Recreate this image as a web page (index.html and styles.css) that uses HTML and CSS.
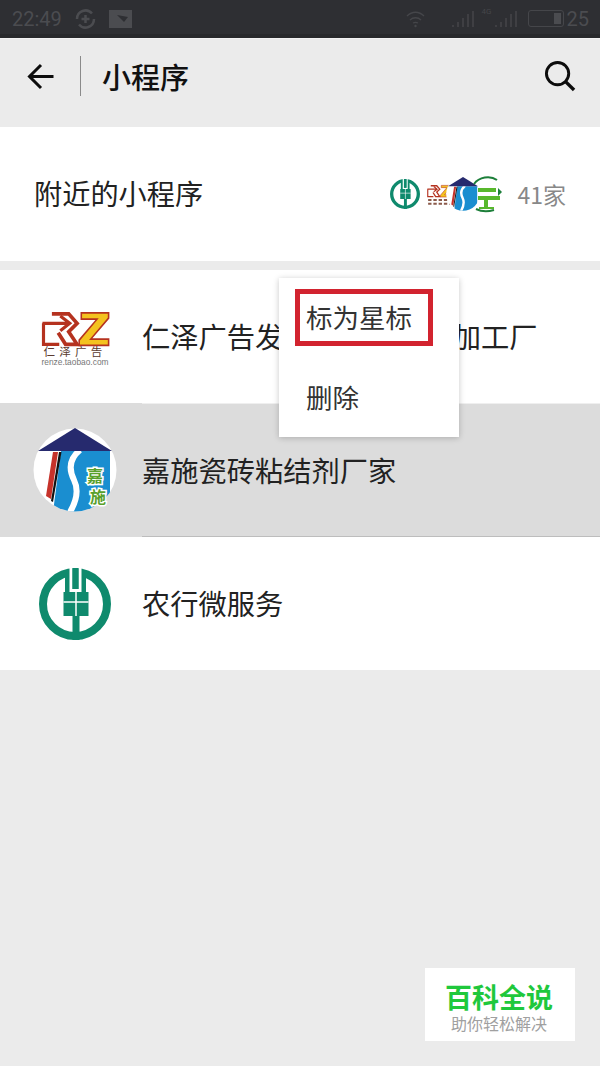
FILE: index.html
```html
<!DOCTYPE html>
<html lang="zh">
<head>
<meta charset="utf-8">
<title>小程序</title>
<link rel="stylesheet" href="styles.css">
</head>
<body>
<svg class="defs" width="0" height="0" aria-hidden="true">
  <symbol id="abc" viewBox="0.500 0 72 72">
    <circle cx="36.500" cy="36" r="32" fill="none" stroke="#0f8a6d" stroke-width="8"/>
    <rect x="26.500" y="3" width="21" height="21" fill="#0f8a6d"/>
    <path d="M31 0h3v21h6V0h3v24H31z" fill="#fff"/>
    <rect x="34" y="0" width="6" height="21" fill="#0f8a6d"/>
    <rect x="25" y="24" width="25" height="24" fill="#0f8a6d"/>
    <rect x="34" y="47" width="7" height="25" fill="#0f8a6d"/>
    <path d="M25 34h25M37.500 24v24" stroke="#fff" stroke-width="1.500" fill="none"/>
  </symbol>
  <symbol id="rz" viewBox="0 0 80 80">
    <path d="M18 18h16l8 9-8 8 8 12H31l-7-11" fill="none" stroke="#b5321f" stroke-width="3.500"/>
    <path d="M9 27h24M26 20l9 7-9 7M10 27v20h15" fill="none" stroke="#b5321f" stroke-width="3"/>
    <path d="M46 17h26v5L55 42h17v6H44v-5L61 23H46z" fill="#f4c21f" stroke="#b5321f" stroke-width="1.500"/>
  </symbol>
  <symbol id="js" viewBox="0 0 84 84">
    <circle cx="42" cy="42" r="41.500" fill="#fff"/>
    <clipPath id="jsclip"><circle cx="42" cy="42" r="41.500"/></clipPath>
    <g clip-path="url(#jsclip)">
      <path d="M28 23h49v61H20z" fill="#1a8ed0"/>
      <path d="M47 22C36 31 36 42 41 52C46 62 44 72 37 84" fill="none" stroke="#fff" stroke-width="6"/>
      <path d="M20 24h5l-7 47-5-3z" fill="#c6322a"/>
      <path d="M26 24h2.500l-8.500 50-2-1z" fill="#111"/>
    </g>
    <path d="M42 0L79 23H5z" fill="#262a6e"/>
  </symbol>
  <symbol id="leaf" viewBox="0 0 32 38">
    <path d="M4 9C9 2 20 0 27 5M6 34q8 4 18 1" fill="none" stroke="#1d7f3a" stroke-width="2"/>
    <path d="M8 13h18v4H8zM8 21h22v4H18v7h6v2H9v-2h5v-7H8z" fill="#58b82c"/>
    <path d="M28 13l4 4-4 4z" fill="#1d7f3a"/>
  </symbol>
</svg>

<div class="status">
  <span class="clock">22:49</span>
  <svg class="st-icon" width="21" height="20" viewBox="0 0 21 20"><path d="M2 10a8.500 8.500 0 0 1 15-5.500M19 10a8.500 8.500 0 0 1-15 5.500" fill="none" stroke="#4b4c50" stroke-width="2.500"/><path d="M10.500 6v8M6.500 10h8" stroke="#4b4c50" stroke-width="2.500"/></svg>
  <svg class="st-icon" width="23" height="18" viewBox="0 0 23 18"><path d="M0 0h23v18H0z" fill="#4b4c50"/><path d="M8 5l11 2-4 5z" fill="#2e2f33"/></svg>
  <span class="st-spacer"></span>
  <svg width="19" height="18" viewBox="0 0 19 18" class="wifi"><path d="M1 6c5-5 12-5 17 0M4 10c3-3 8-3 11 0M7 13c2-1 3-1 5 0" fill="none" stroke="#45464a" stroke-width="1.300"/><circle cx="9.500" cy="16" r="1.200" fill="#45464a"/></svg>
  <svg width="23" height="18" viewBox="0 0 23 18" class="sig1"><path d="M2 17v-2M7 17v-5M12 17V8M17 17V4M22 17V1" stroke="#45464a" stroke-width="1.500"/></svg>
  <span class="lte">4G</span>
  <svg width="23" height="18" viewBox="0 0 23 18" class="sig2"><path d="M2 17v-2M7 17v-5M12 17V8M17 17V4M22 17V1" stroke="#45464a" stroke-width="1.500"/></svg>
  <span class="batt"><span class="batt-fill"></span></span>
  <span class="pct">25</span>
</div>

<header class="bar">
  <svg class="back" width="27" height="27" viewBox="0 0 27 27"><path d="M26.500 13.500H3M14 2L2.500 13.500 14 25" fill="none" stroke="#0c0c0c" stroke-width="3"/></svg>
  <span class="sep"></span>
  <h1 class="title">小程序</h1>
  <svg class="search" width="32" height="32" viewBox="0 0 33 33"><circle cx="14" cy="14" r="11.500" fill="none" stroke="#0c0c0c" stroke-width="3"/><path d="M22 22l9 9" stroke="#0c0c0c" stroke-width="3.500"/></svg>
</header>

<section class="nearby">
  <span class="nearby-label">附近的小程序</span>
  <span class="stack">
    <svg class="av av-abc"><use href="#abc"/></svg>
    <svg class="av av-rz" viewBox="0 0 80 80">
      <use href="#rz" width="80" height="80"/>
      <path d="M11 56h58M11 66h58" stroke="#8a5a4a" stroke-width="5" stroke-dasharray="9 5" fill="none"/>
    </svg>
    <svg class="av av-js"><use href="#js"/></svg>
    <svg class="av av-leaf"><use href="#leaf"/></svg>
  </span>
  <span class="count">41家</span>
</section>

<ul class="list">
  <li class="row">
    <span class="logo">
      <svg class="logo-rz" viewBox="0 0 80 80">
        <use href="#rz" width="80" height="80"/>
        <text x="40" y="58" class="rz-cn" text-anchor="middle">仁泽广告</text>
        <text x="40" y="67" class="rz-en" text-anchor="middle">renze.taobao.com</text>
      </svg>
    </span>
    <span class="name">仁泽广告发光字招牌标识加工厂</span>
  </li>
  <li class="row row-active">
    <span class="logo">
      <svg class="logo-js" viewBox="0 0 84 84">
        <use href="#js" width="84" height="84"/>
        <text x="62" y="54" class="js-cn" text-anchor="middle">嘉</text>
        <text x="65" y="75" class="js-cn" text-anchor="middle">施</text>
      </svg>
    </span>
    <span class="name">嘉施瓷砖粘结剂厂家</span>
  </li>
  <li class="row">
    <span class="logo"><svg class="logo-abc"><use href="#abc"/></svg></span>
    <span class="name">农行微服务</span>
  </li>
</ul>

<div class="menu">
  <div class="menu-item menu-item-marked">标为星标</div>
  <div class="menu-item">删除</div>
</div>

<aside class="mark">
  <span class="mark-title">百科全说</span>
  <span class="mark-sub">助你轻松解决</span>
</aside>
</body>
</html>
```
FILE: styles.css
```css
* { box-sizing: border-box; }
html, body { margin: 0; padding: 0; }
body {
  position: relative;
  width: 600px;
  height: 1066px;
  overflow: hidden;
  background: #ebebeb;
  font-family: "Noto Sans CJK SC", "Noto Sans", sans-serif;
  color: #1a1a1a;
}
.defs { position: absolute; }
.rz-cn { font-size: 11px; fill: #5a3a30; letter-spacing: 4px; font-family: "Noto Sans CJK SC", sans-serif; }
.rz-en { font-size: 8px; fill: #777; font-family: "Liberation Sans", sans-serif; }
.js-cn { font-size: 16px; font-weight: 700; fill: #5aa02c; stroke: #fff; stroke-width: 3px; paint-order: stroke; font-family: "Noto Sans CJK SC", sans-serif; }

.status {
  display: flex;
  align-items: center;
  height: 39px;
  padding: 0 11px 1px 12px;
  background: #2e2f33;
  border-bottom: 1px solid #f3f3f3;
  box-shadow: inset 0 -4px 0 #28292c;
}
.clock { font: 20px Roboto, sans-serif; color: #4b4c50; margin-right: 13px; }
.st-icon { margin-right: 13px; }
.st-spacer { flex: 1; }
.wifi { margin-right: 26px; }
.sig1 { margin-right: 8px; }
.lte { width: 10px; margin-right: 2px; font: 8px Roboto, sans-serif; color: #45464a; align-self: flex-start; margin-top: 7px; }
.batt {
  display: flex;
  justify-content: flex-end;
  align-items: center;
  width: 36px;
  height: 17px;
  margin-left: 11px;
  padding: 2px;
  border: 1.500px solid #45464a;
  border-radius: 3px;
}
.batt-fill { width: 7px; height: 11px; background: #4b4c50; }
.pct { font: 20px Roboto, sans-serif; color: #4b4c50; margin-left: 3px; }

.bar {
  display: flex;
  align-items: center;
  height: 88px;
  padding: 0 24px 14px 27px;
  background: #ebebeb;
}
.back { flex: none; }
.sep { width: 1px; height: 40px; margin: 0 21px 0 26px; background: #8a8a8a; }
.title { flex: 1; margin: 0; font-size: 29px; font-weight: 500; color: #111; line-height: 1; }
.search { flex: none; }

.nearby {
  display: flex;
  align-items: center;
  height: 134px;
  padding: 0 34px 0 34px;
  background: #fff;
}
.nearby-label { flex: 1; font-size: 28.200px; line-height: 1; color: #222; padding-bottom: 2px; }
.stack { display: flex; align-items: center; margin-right: 15px; }
.av { display: block; width: 30px; height: 30px; flex: none; }
.av-rz { margin-left: 4px; width: 30px; height: 30px; }
.av-js { margin-left: -8px; width: 34px; height: 34px; }
.av-leaf { margin-left: -10px; width: 32px; height: 38px; }
.count { font-size: 23px; line-height: 1; color: #888; font-family: "Noto Sans CJK SC", Roboto, sans-serif; }

.list { list-style: none; margin: 9px 0 0; padding: 0; }
.row {
  display: flex;
  align-items: center;
  height: 133px;
  padding-left: 33px;
  background: #fff;
  position: relative;
}
.row-active { background: #dcdcdc; height: 134px; }
.row-active::before,
.row-active::after { content: ""; position: absolute; left: 142px; right: 0; height: 1px; }
.row-active::before { top: 0; background: #efefef; }
.row-active::after { bottom: 0; background: #bdbdbd; }
.logo { display: flex; justify-content: center; align-items: center; width: 84px; height: 84px; margin-right: 25px; flex: none; }
.logo-rz { width: 84px; height: 84px; }
.logo-js { width: 84px; height: 84px; }
.logo-abc { width: 72px; height: 72px; }
.name { font-size: 28.250px; line-height: 1; color: #222; white-space: nowrap; }

.menu {
  position: absolute;
  left: 279px;
  top: 278px;
  width: 180px;
  height: 159px;
  padding: 11px 0 0 16px;
  background: #fff;
  box-shadow: 0 1px 6px rgba(0, 0, 0, 0.22);
}
.menu-item { font-size: 26.500px; line-height: 1; color: #333; padding: 0 0 0 11px; }
.menu-item-marked {
  width: 138px;
  height: 57px;
  display: flex;
  align-items: center;
  padding-left: 6px;
  margin-bottom: 38px;
  border: 5px solid #d2232f;
  white-space: nowrap;
}

.mark {
  position: absolute;
  left: 425px;
  top: 968px;
  width: 150px;
  height: 73px;
  display: flex;
  flex-direction: column;
  align-items: center;
  justify-content: center;
  gap: 2px;
  padding: 4px 2px 0 0;
  background: #fff;
}
.mark-title { font-size: 27px; line-height: 30px; font-weight: 700; color: #1fc83c; }
.mark-sub { font-size: 16px; line-height: 18px; color: #a0a0a0; }
```
